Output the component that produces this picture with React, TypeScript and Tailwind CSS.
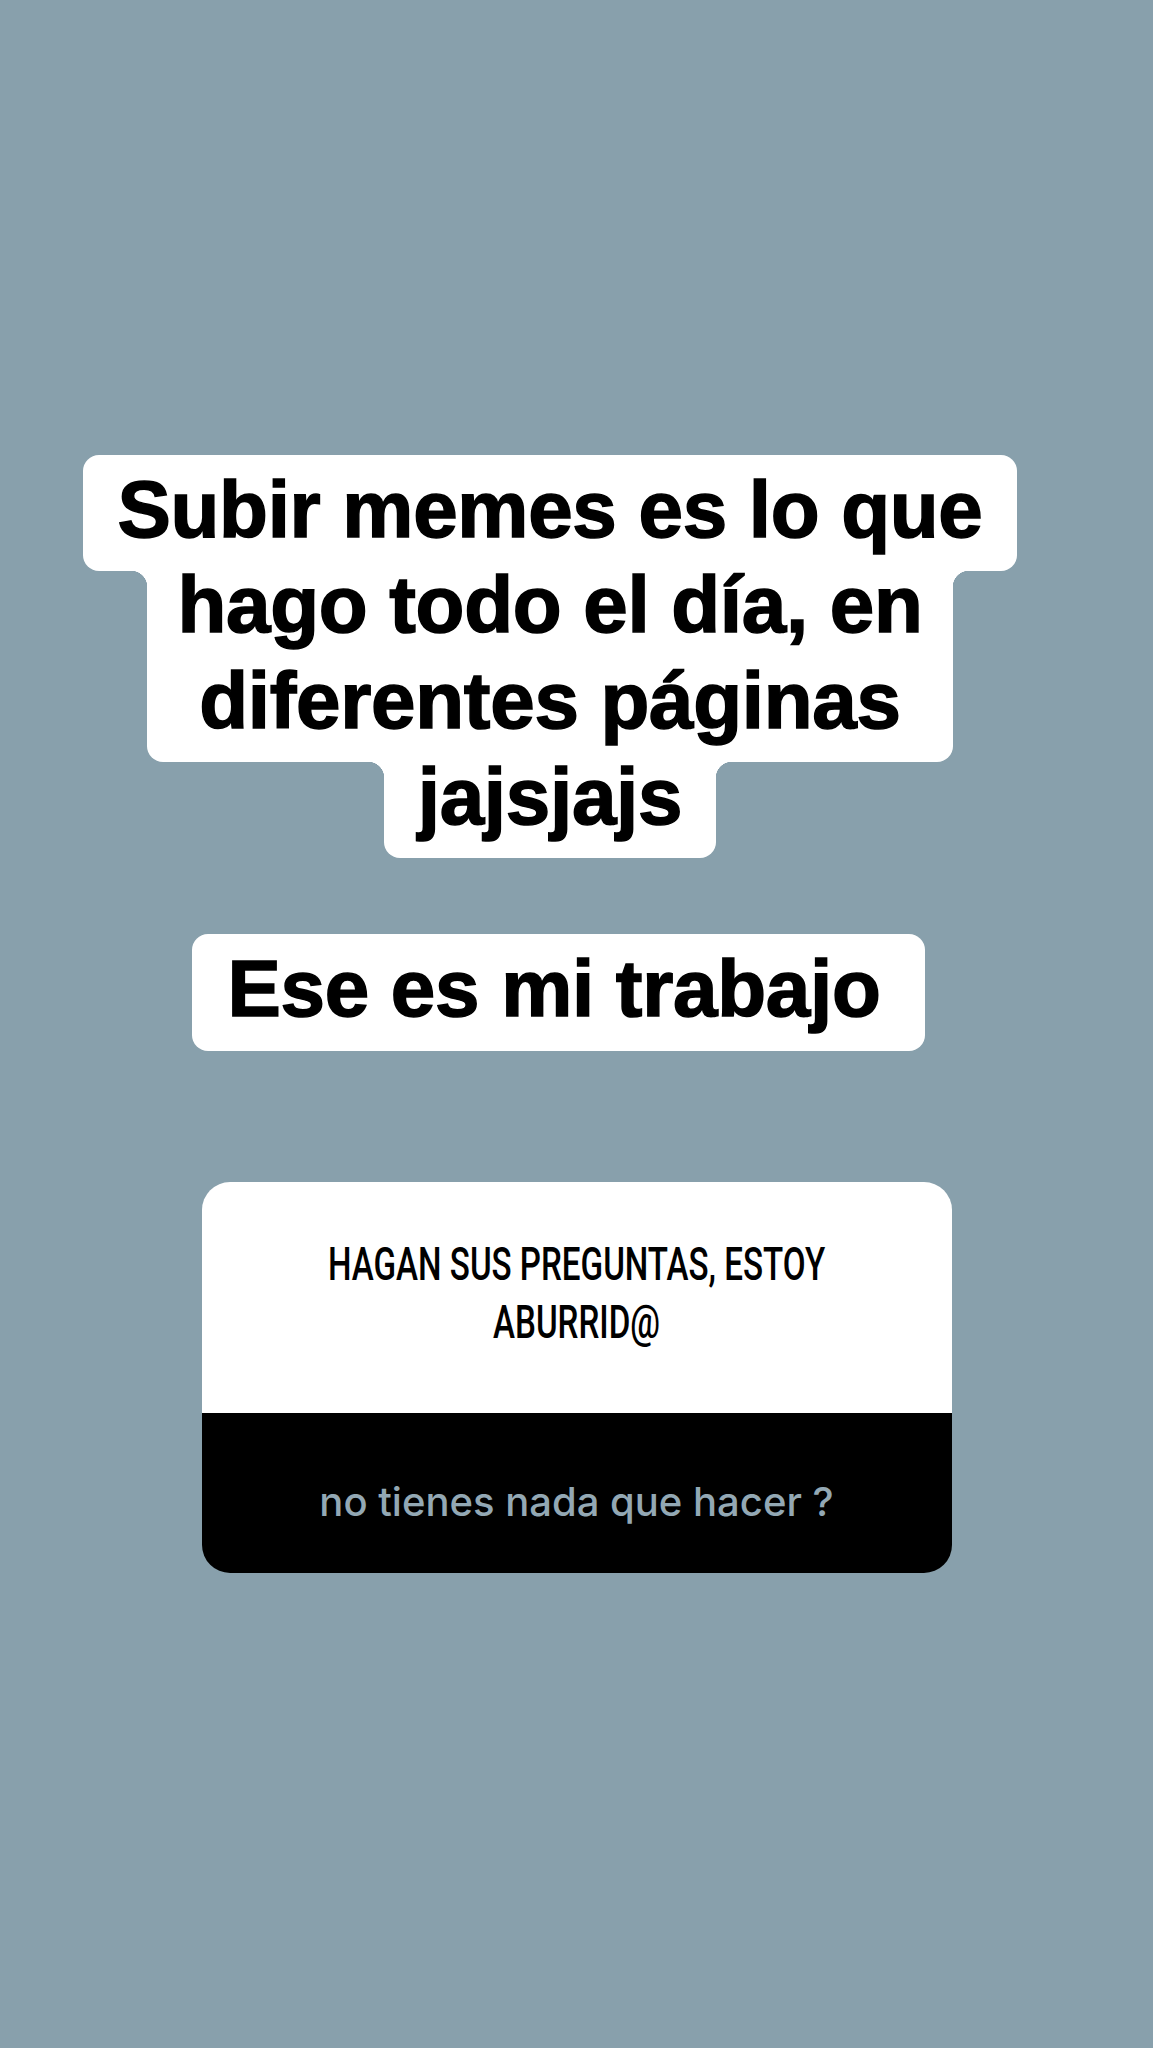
import React from "react";

const heavy = { fontFamily: '"Liberation Sans", Arial, sans-serif' };

const fillets =
  "relative before:absolute before:top-0 before:-left-[16px] before:w-[16px] before:h-[16px] before:bg-[radial-gradient(circle_at_0_100%,transparent_16px,white_16.5px)] after:absolute after:top-0 after:-right-[16px] after:w-[16px] after:h-[16px] after:bg-[radial-gradient(circle_at_100%_100%,transparent_16px,white_16.5px)]";

export default function App() {
  return (
    <div className="min-h-[2048px] w-full bg-[#88a0ac] flex flex-col pt-[455px]">
      {/* Highlighted text block */}
      <div
        className="flex flex-col items-center pr-[53px] text-black font-bold text-[80px] tracking-[-0.3px] [-webkit-text-stroke:1.5px_black]"
        style={heavy}
      >
        <div className="bg-white rounded-[16px] px-[34px] pt-[7px] pb-[13px] leading-[96px] whitespace-nowrap">
          Subir memes es lo que
        </div>
        <div
          className={`bg-white rounded-b-[16px] px-[30px] h-[191px] flex flex-col items-center leading-[96px] whitespace-nowrap ${fillets}`}
        >
          <div className="-mt-[14px]">hago todo el día, en</div>
          <div>diferentes páginas</div>
        </div>
        <div
          className={`bg-white rounded-b-[16px] px-[34px] h-[96px] flex flex-col items-center leading-[96px] whitespace-nowrap ${fillets}`}
        >
          <div className="-mt-[13px]">jajsjajs</div>
        </div>
      </div>

      <div
        className="flex flex-col items-center pr-[37px] mt-[76px] text-black font-bold text-[80px] tracking-[-0.3px] [-webkit-text-stroke:1.5px_black]"
        style={heavy}
      >
        <div className="bg-white rounded-[16px] pl-[36px] pr-[44px] pt-[7px] pb-[14px] leading-[96px] whitespace-nowrap">
          Ese es mi trabajo
        </div>
      </div>

      {/* Question sticker */}
      <div className="mt-[131px] mx-auto w-[750px] rounded-[28px] overflow-hidden flex flex-col">
        <div className="bg-white h-[231px] pt-[53px] flex justify-center">
          <span
            className="shrink-0 block scale-x-[0.705] text-center text-[47px] leading-[58px] font-medium text-black whitespace-nowrap"
            style={{ fontFamily: 'Roboto, "Liberation Sans", Arial, sans-serif' }}
          >
            HAGAN SUS PREGUNTAS, ESTOY
            <br />
            ABURRID@
          </span>
        </div>
        <div
          className="bg-black h-[160px] pt-[69px] text-center text-[40px] leading-[40px] font-medium text-[#93a8b4]"
          style={{ fontFamily: 'Inter, "Noto Sans", sans-serif' }}
        >
          no tienes nada que hacer ?
        </div>
      </div>
    </div>
  );
}
